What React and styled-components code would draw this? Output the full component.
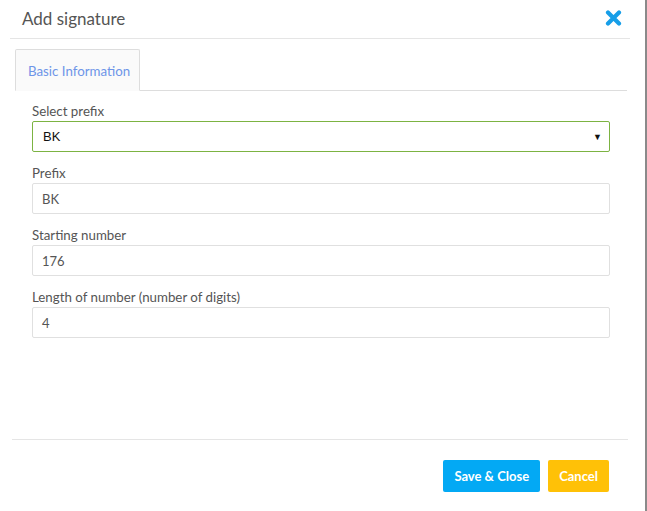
import React from 'react'
import styled, { createGlobalStyle } from 'styled-components'

const Global = createGlobalStyle`
  html, body {
    margin: 0;
    padding: 0;
    background: #fff;
  }
  body {
    font-family: Lato, "Open Sans", sans-serif;
  }
`

const Page = styled.div`
  display: flex;
  width: 647px;
  height: 511px;
  overflow: hidden;
`

const Modal = styled.div`
  flex: 1;
  display: flex;
  flex-direction: column;
  background: #fff;
`

const Edge = styled.div`
  width: 2px;
  background: #8a8a8a;
`

const Header = styled.header`
  display: flex;
  justify-content: space-between;
  align-items: center;
  height: 39px;
  margin: 0 15px 0 10px;
  padding: 0 8px 2px 12px;
  border-bottom: 1px solid #e5e5e5;
  box-sizing: border-box;
`

const Title = styled.h2`
  margin: 0;
  font-size: 17px;
  font-weight: 400;
  color: #555;
`

const Close = styled.button`
  border: none;
  background: none;
  padding: 0;
  display: flex;
  cursor: pointer;
`

const Tabs = styled.div`
  display: flex;
  margin: 10px 18px 0 15px;
  border-bottom: 1px solid #ddd;
`

const Tab = styled.div`
  padding: 13px 9px 11px 12px;
  margin-bottom: -1px;
  border: 1px solid #ddd;
  border-bottom: 1px solid #fafafa;
  border-radius: 2px 2px 0 0;
  background-color: #fafafa;
  background-image: radial-gradient(#e4e6ee 0.6px, transparent 0.7px);
  background-size: 4px 4px;
  font-size: 13.3px;
  color: #6e95e8;
`

const Body = styled.div`
  display: flex;
  flex-direction: column;
  padding: 12px 35px 0 32px;
  gap: 13px;
  flex: 1;
`

const Field = styled.div`
  display: flex;
  flex-direction: column;
  gap: 1px;
`

const Label = styled.label`
  font-size: 13.3px;
  color: #555;
  line-height: 17px;
`

const Input = styled.div`
  height: 31px;
  box-sizing: border-box;
  border: 1px solid ${p => (p.$active ? '#7cb342' : '#e0e0e0')};
  border-radius: 2px;
  display: flex;
  align-items: center;
  justify-content: space-between;
  padding: 0 7px 0 ${p => (p.$select ? '10px' : '9px')};
  font-size: 13px;
  color: ${p => (p.$select ? '#111' : '#555')};
  font-family: ${p => (p.$select ? '"Liberation Sans", Arial, sans-serif' : 'inherit')};
`

const Caret = styled.span`
  font-size: 9px;
  color: #111;
`

const Footer = styled.footer`
  display: flex;
  justify-content: flex-end;
  gap: 8px;
  margin: 0 17px 0 12px;
  padding: 20px 19px 19px 0;
  border-top: 1px solid #e5e5e5;
`

const Button = styled.button`
  height: 32px;
  padding: 0 11px;
  border: none;
  border-radius: 2px;
  background: ${p => p.$bg};
  color: #fff;
  font-family: inherit;
  font-size: 13px;
  font-weight: 700;
`

const fields = [
  { label: 'Prefix', value: 'BK' },
  { label: 'Starting number', value: '176' },
  { label: 'Length of number (number of digits)', value: '4' },
]

export default function App() {
  return (
    <Page>
      <Global />
      <Modal>
        <Header>
          <Title>Add signature</Title>
          <Close aria-label="close">
            <svg width="17" height="16" viewBox="0 0 17 16">
              <path d="M3 2.5 L14 13.5 M14 2.5 L3 13.5" stroke="#169ee8" strokeWidth="4.2" strokeLinecap="round" />
            </svg>
          </Close>
        </Header>
        <Tabs>
          <Tab>Basic Information</Tab>
        </Tabs>
        <Body>
          <Field>
            <Label>Select prefix</Label>
            <Input $active $select>
              BK
              <Caret>▼</Caret>
            </Input>
          </Field>
          {fields.map(f => (
            <Field key={f.label}>
              <Label>{f.label}</Label>
              <Input>{f.value}</Input>
            </Field>
          ))}
        </Body>
        <Footer>
          <Button $bg="#03a9f4">Save &amp; Close</Button>
          <Button $bg="#ffc107">Cancel</Button>
        </Footer>
      </Modal>
      <Edge />
    </Page>
  )
}
